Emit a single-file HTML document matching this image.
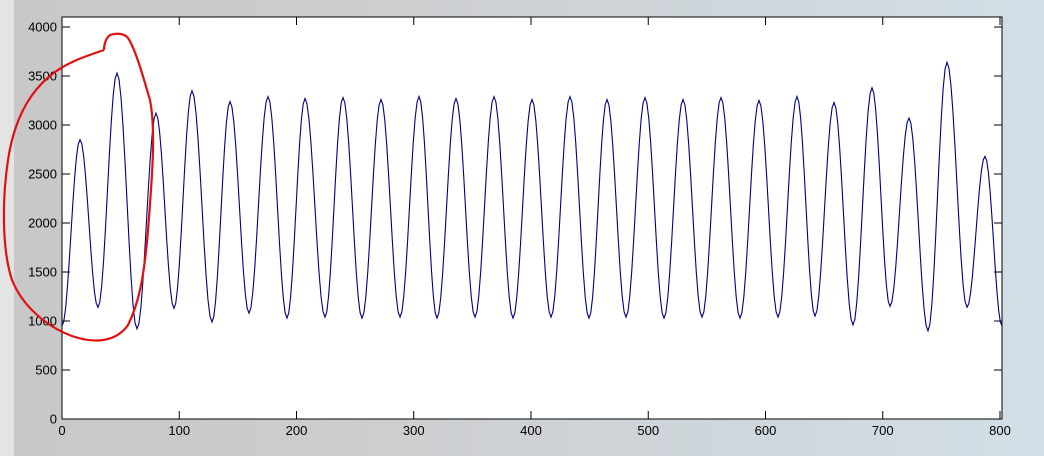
<!DOCTYPE html><html><head><meta charset="utf-8"><style>
body{margin:0;width:1044px;height:456px;overflow:hidden;background:linear-gradient(90deg,#e4e4e4 0,#e4e4e4 14px,#c8c8c8 14px,#cccccc 300px,#cfd6db 700px,#d3dee6 1044px);font-family:"Liberation Sans",sans-serif}
svg{position:absolute;left:0;top:0}
</style></head><body>
<svg width="1044" height="456" id="s">
<rect x="62" y="17" width="940" height="402" fill="#fff" stroke="#000" stroke-width="1"/>
<g id="ax" font-size="13" fill="#000"></g>
<polyline id="w" fill="none" stroke="#000080" stroke-width="1.1"/>
<path d="M104,50 C104,44 106,38 110,35 C116,33 124,33 128,38 C136,50 144,80 150,100 C156,130 152,180 148,230 C144,280 138,305 128,325 C116,342 95,344 72,336 C45,326 22,305 12,280 C2,250 2,200 8,160 C14,120 30,90 55,72 C72,60 90,55 104,50" fill="none" stroke="#e01010" stroke-width="2.2"/>
</svg>
<script>
var ax=document.getElementById('ax'),h='';
function X(v){return 62+v*1.1725}function Y(v){return 419-v*0.098}
for(var v=0;v<=4000;v+=500){var y=Y(v);h+='<line x1="62" x2="70" y1="'+y+'" y2="'+y+'" stroke="#000"/><line x1="994" x2="1002" y1="'+y+'" y2="'+y+'" stroke="#000"/><text x="57" y="'+(y+4.5)+'" text-anchor="end">'+v+'</text>';}
for(var v=0;v<=800;v+=100){var x=X(v);h+='<line x1="'+x+'" x2="'+x+'" y1="419" y2="411" stroke="#000"/><line x1="'+x+'" x2="'+x+'" y1="17" y2="25" stroke="#000"/><text x="'+x+'" y="435" text-anchor="middle">'+v+'</text>';}
ax.innerHTML=h;
var pk=[[80,2850],[117,3530],[156,3120],[192,3350],[230,3240],[268,3290],[305,3270],[343,3280],[381,3260],[419,3290],[456,3270],[494,3290],[532,3260],[570,3290],[607,3260],[645,3280],[683,3260],[721,3280],[759,3250],[797,3290],[834,3230],[872,3380],[909,3070],[947,3640],[985,2680]];
var tr=[[62,950],[98,1140],[137,920],[174,1130],[212,990],[249,1080],[287,1030],[325,1040],[362,1030],[400,1040],[437,1030],[475,1040],[513,1030],[551,1040],[589,1030],[626,1040],[664,1030],[702,1040],[740,1030],[778,1040],[815,1050],[853,960],[890,1150],[928,900],[967,1140],[1002,950]];
var e=[];for(var i=0;i<tr.length;i++){e.push(tr[i]);if(pk[i])e.push(pk[i]);}
var pts=[];for(var i=0;i<e.length-1;i++){var a=e[i],b=e[i+1];for(var t=0;t<1;t+=0.1){var px=a[0]+(b[0]-a[0])*t;var val=a[1]+(b[1]-a[1])*(1-Math.cos(Math.PI*t))/2;pts.push(px.toFixed(1)+','+Y(val).toFixed(1));}}
pts.push('1002,'+Y(950));
document.getElementById('w').setAttribute('points',pts.join(' '));
</script>
</body></html>
